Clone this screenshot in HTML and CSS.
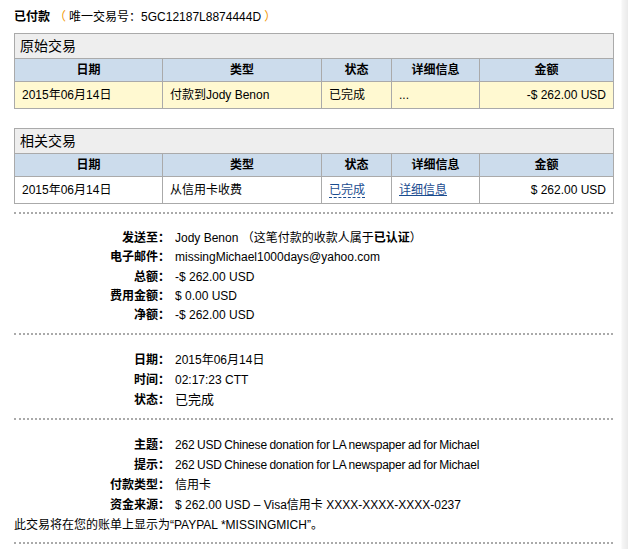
FILE: index.html
```html
<!DOCTYPE html>
<html lang="zh-CN">
<head>
<meta charset="utf-8">
<title>已付款</title>
<link rel="stylesheet" href="styles.css">
</head>
<body>
<div class="page">
  <h1 class="title"><b>已付款</b><span class="paren open">（</span>唯一交易号：5GC12187L8874444D<span class="paren close">）</span></h1>

  <table class="tx tx-orig">
    <colgroup><col class="c1"><col class="c2"><col class="c3"><col class="c4"><col class="c5"></colgroup>
    <tr><td class="cap" colspan="5">原始交易</td></tr>
    <tr class="head">
      <th>日期</th><th>类型</th><th>状态</th><th>详细信息</th><th>金额</th>
    </tr>
    <tr class="row yellow">
      <td>2015年06月14日</td><td>付款到Jody Benon</td><td>已完成</td><td>...</td><td class="amt">-$ 262.00 USD</td>
    </tr>
  </table>

  <table class="tx tx-rel">
    <colgroup><col class="c1"><col class="c2"><col class="c3"><col class="c4"><col class="c5"></colgroup>
    <tr><td class="cap" colspan="5">相关交易</td></tr>
    <tr class="head">
      <th>日期</th><th>类型</th><th>状态</th><th>详细信息</th><th>金额</th>
    </tr>
    <tr class="row">
      <td>2015年06月14日</td><td>从信用卡收费</td><td><a class="dash" href="#">已完成</a></td><td><a class="ul" href="#">详细信息</a></td><td class="amt">$ 262.00 USD</td>
    </tr>
  </table>

  <div class="sep"></div>

  <dl class="info info-a">
    <dt>发送至：</dt><dd>Jody Benon （这笔付款的收款人属于<b>已认证</b>）</dd>
    <dt>电子邮件：</dt><dd>missingMichael1000days@yahoo.com</dd>
    <dt>总额：</dt><dd>-$ 262.00 USD</dd>
    <dt>费用金额：</dt><dd>$ 0.00 USD</dd>
    <dt>净额：</dt><dd>-$ 262.00 USD</dd>
  </dl>

  <div class="sep"></div>

  <dl class="info info-b">
    <dt>日期：</dt><dd>2015年06月14日</dd>
    <dt>时间：</dt><dd>02:17:23 CTT</dd>
    <dt>状态：</dt><dd class="big">已完成</dd>
  </dl>

  <div class="sep"></div>

  <dl class="info info-c">
    <dt>主题：</dt><dd class="tight">262 USD Chinese donation for LA newspaper ad for Michael</dd>
    <dt>提示：</dt><dd class="tight">262 USD Chinese donation for LA newspaper ad for Michael</dd>
    <dt>付款类型：</dt><dd>信用卡</dd>
    <dt>资金来源：</dt><dd>$ 262.00 USD – Visa信用卡 XXXX-XXXX-XXXX-0237</dd>
  </dl>
  <p class="note">此交易将在您的账单上显示为“PAYPAL *MISSINGMICH”。</p>

  <div class="sep"></div>
</div>
</body>
</html>
```

FILE: styles.css
```css
html {
  background: linear-gradient(to right, #ffffff 0, #ffffff 621px, #f6f6f6 622px, #eaeaea 628px);
  min-height: 100%;
}
body {
  margin: 0;
  font-family: "Liberation Sans", Arial, "Noto Sans CJK SC", sans-serif;
  font-size: 12px;
  color: #000;
}
.page {
  width: 599px;
  padding: 10px 0 0 14px;
}
.title {
  margin: 0;
  font-size: 12px;
  font-weight: normal;
  line-height: 15px;
  height: 15px;
}
.title b { font-weight: bold; }
.paren { color: #f39800; }
.paren.open { margin-left: 4px; margin-right: 3px; }
.paren.close { margin-left: 3px; }

.tx {
  width: 599px;
  border-collapse: collapse;
  table-layout: fixed;
  margin-top: 8px;
}
.tx-rel { margin-top: 19px; }
.tx col.c1 { width: 148px; }
.tx col.c2 { width: 159px; }
.tx col.c3 { width: 70px; }
.tx col.c4 { width: 88px; }
.tx col.c5 { width: 134px; }
.tx td, .tx th {
  border: 1px solid #aaaaaa;
  padding: 0 7px;
  line-height: 14px;
  white-space: nowrap;
  overflow: hidden;
}
.tx .cap {
  background: #eeeeee;
  height: 24px;
  font-size: 14px;
  padding: 0 5px;
  text-align: left;
}
.tx th {
  background: #ccdcec;
  height: 22px;
  font-weight: bold;
  text-align: center;
}
.tx .row td { height: 26px; }
.tx .yellow td { background: #fff9d1; }
.tx td.amt { text-align: right; }

a { color: #1a4c8f; text-decoration: none; }
a.dash { border-bottom: 1px dashed #1a4c8f; }
a.ul { text-decoration: underline; }

.sep {
  border-top: 2px dotted #aaaaaa;
  margin-top: 8px;
}
.info {
  display: grid;
  grid-template-columns: 156px 1fr;
  column-gap: 5px;
  margin: 15px 0 0 0;
}
.info dt {
  font-weight: bold;
  text-align: right;
}
.info dd { margin: 0; white-space: nowrap; }
.info dt, .info dd { line-height: 20px; height: 20px; }
.info-a dt, .info-a dd { line-height: 19.3px; height: 19.3px; }
.info dd.big { font-size: 13px; }
.info dd.tight { letter-spacing: -0.2px; word-spacing: -0.6px; }
.note {
  margin: 0;
  line-height: 20px;
}
.note + .sep { margin-top: 7px; }
```
